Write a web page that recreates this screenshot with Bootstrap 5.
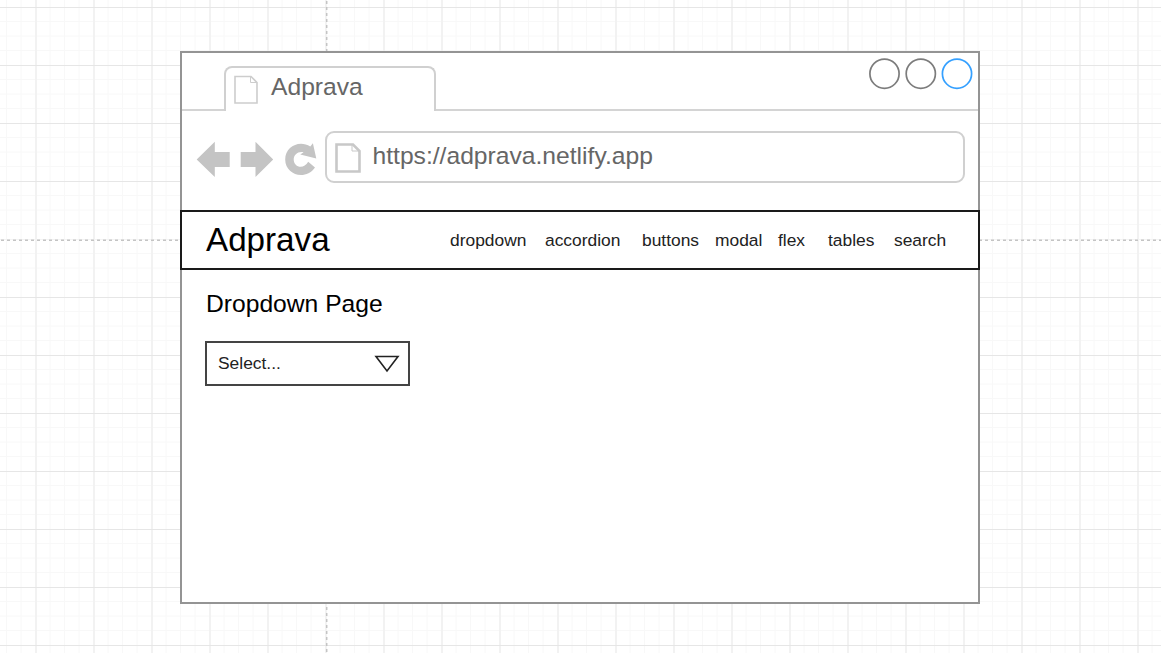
<!DOCTYPE html>
<html lang="en">
<head>
<meta charset="utf-8">
<meta name="viewport" content="width=device-width, initial-scale=1">
<title>Adprava wireframe</title>
<link href="https://cdn.jsdelivr.net/npm/bootstrap@5.3.0/dist/css/bootstrap.min.css" rel="stylesheet">
<style>
body{height:653px;overflow:hidden;font-family:"Liberation Sans",Arial,sans-serif;line-height:1;color:#000}
.board{height:653px;padding:51px 181px 49px 180px}
.gridlines{left:0;top:0;width:1161px;height:653px;z-index:0}
.window{z-index:1;height:553px;border:2px solid #949494;background:#fff}
.tabs{height:58px}
.tabline{border-bottom:2px solid #d4d4d4}
.tab{width:212px;height:45px;margin-top:13px;border:2px solid #d0d0d0;border-bottom:0;border-radius:8px 8px 0 0;padding:7px 0 0 7px}
.chrome-text{font-size:24.65px;color:#666;white-space:nowrap}
.tab .chrome-text{margin:0 0 0 13px}
.controls{padding:4px 5px 0 0}
.toolbar{height:100px;padding:19px 12px 0 14px}
.address{width:640px;height:52px;margin:1px 0 0 0;border:2px solid #d0d0d0;border-radius:9px;padding:10px 0 0 7px}
.address .chrome-text{margin:1px 0 0 11.5px}
.sitebar{height:60px;margin:-1px -2px 0;border:2px solid #1a1a1a;padding:0 30px 0 24px}
.sitebar .navbar-brand{font-size:33.2px;line-height:38px;color:#000;padding:0;margin:0}
.sitebar .nav-link{font-size:17.4px;line-height:20px;color:#222;padding:0;white-space:nowrap}
.page-title{font-size:24.65px;line-height:28px;margin:0}
.page-body{padding:20px 24px 0 24px}
.picker{width:205px;height:45px;margin-top:23px;margin-left:-1px;border:2px solid #444;border-radius:0;background:#fff;padding:0 8px 0 11px;font-size:17.4px;color:#222}
svg{display:block;flex:none}
</style>
</head>
<body>
<div class="board position-relative">
  <svg class="gridlines position-absolute" viewBox="0 0 1161 653" aria-hidden="true">
    <defs>
      <pattern id="cells" x="35" y="7" width="58" height="58" patternUnits="userSpaceOnUse">
        <path d="M15 0V58M29.5 0V58M44 0V58M0 14.5H58M0 29H58M0 43.5H58" stroke="#f8f8f8"/>
        <path d="M1 0V58" stroke="#f2f2f2" stroke-width="2"/>
        <path d="M0 .5H58" stroke="#e6e6e6"/>
      </pattern>
    </defs>
    <rect width="1161" height="653" fill="url(#cells)"/>
    <path d="M0 239.500H1161" stroke="#f4f4f4"/>
    <path d="M0 240.200H1161M326.700 0V653" stroke="#c4c4c4" stroke-width="1.500" stroke-dasharray="3 3" stroke-dashoffset="5"/>
  </svg>

  <main class="window position-relative">
    <div class="tabs d-flex">
      <div class="tabline" style="width:42px"></div>
      <div class="tab d-flex align-items-start">
        <svg width="25" height="29" viewBox="0 0 25 29" fill="none" stroke="#cdcdcd"><path d="M2 1.500H18L24 7.500V28H2Z" stroke-width="1.600"/><path d="M17.500 1.500V7.500H24" stroke-width="1"/></svg>
        <span class="chrome-text">Adprava</span>
      </div>
      <div class="tabline flex-grow-1">
        <div class="controls d-flex justify-content-end">
          <svg width="106" height="34" viewBox="0 0 106 34" fill="none" stroke-width="1.7"><circle cx="17.500" cy="16.700" r="14.600" stroke="#7c7c7c"/><circle cx="53.800" cy="16.700" r="14.600" stroke="#7c7c7c"/><circle cx="90" cy="16.700" r="14.600" stroke="#35a0ff"/></svg>
        </div>
      </div>
    </div>

    <div class="toolbar d-flex align-items-start">
      <svg width="129" height="52" viewBox="196 130 129 52" fill="#c4c4c4">
        <path d="M196.700 159.500L214.800 141.800V152H229.700V167H214.800V177Z"/>
        <path d="M273.200 159.500L255.500 141.800V152H240.700V167H255.500V177Z"/>
        <path d="M312.900 143.300L316.300 158.500L300.300 154.500L303.600 152.300C298.500 150.800 293.700 154.500 293.700 159.500C293.700 167.200 303.500 170.200 308.200 161.800L315 167.400C305.500 181 285.200 175 285.200 159.500C285.200 146.500 299.500 139.500 310.300 146.600Z"/>
      </svg>
      <div class="address d-flex align-items-start">
        <svg width="27" height="30" viewBox="0 0 27 30" fill="none" stroke="#c8c8c8"><path d="M2.500 1.500H19L25.500 8V28.500H2.500Z" stroke-width="2.600"/><path d="M18 2V8H25" stroke-width="1"/></svg>
        <span class="chrome-text">https://adprava.netlify.app</span>
      </div>
    </div>

    <nav class="sitebar navbar flex-nowrap justify-content-between">
      <a class="navbar-brand" href="#">Adprava</a>
      <div class="d-flex">
        <a class="nav-link" href="#" style="width:95px">dropdown</a>
        <a class="nav-link" href="#" style="width:97px">accordion</a>
        <a class="nav-link" href="#" style="width:73px">buttons</a>
        <a class="nav-link" href="#" style="width:63px">modal</a>
        <a class="nav-link" href="#" style="width:50px">flex</a>
        <a class="nav-link" href="#" style="width:66px">tables</a>
        <a class="nav-link" href="#" style="width:54px">search</a>
      </div>
    </nav>

    <section class="page-body">
      <h1 class="page-title fw-normal">Dropdown Page</h1>
      <button class="picker btn d-flex align-items-center justify-content-between" type="button">
        <span>Select...</span>
        <svg width="26" height="18" viewBox="0 0 26 18" fill="none" stroke="#222" stroke-width="1.6"><path d="M2 1.500H24L13 16Z"/></svg>
      </button>
    </section>
  </main>
</div>
<script src="https://cdn.jsdelivr.net/npm/bootstrap@5.3.0/dist/js/bootstrap.bundle.min.js"></script>
</body>
</html>
